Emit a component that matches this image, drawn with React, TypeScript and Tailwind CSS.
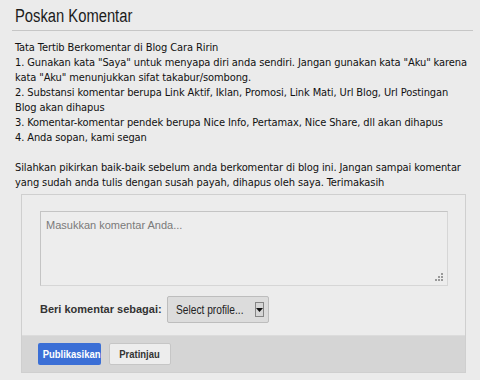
const rules = [
  'Tata Tertib Berkomentar di Blog Cara Ririn',
  '1. Gunakan kata "Saya" untuk menyapa diri anda sendiri. Jangan gunakan kata "Aku" karena',
  'kata "Aku" menunjukkan sifat takabur/sombong.',
  '2. Substansi komentar berupa Link Aktif, Iklan, Promosi, Link Mati, Url Blog, Url Postingan',
  'Blog akan dihapus',
  '3. Komentar-komentar pendek berupa Nice Info, Pertamax, Nice Share, dll akan dihapus',
  '4. Anda sopan, kami segan',
];

const closing = [
  'Silahkan pikirkan baik-baik sebelum anda berkomentar di blog ini. Jangan sampai komentar',
  'yang sudah anda tulis dengan susah payah, dihapus oleh saya. Terimakasih',
];

function ResizeGrip() {
  // little dotted triangle in the corner of the text box
  return (
    <svg width="9" height="9" viewBox="0 0 9 9" className="absolute right-[3px] bottom-[3px]">
      {[
        [6, 0], [6, 3], [3, 3], [6, 6], [3, 6], [0, 6],
      ].map(([x, y], i) => (
        <rect key={i} x={x} y={y} width="2" height="2" fill="#9a9a9a" />
      ))}
    </svg>
  );
}

export default function App() {
  return (
    <div className="w-[480px] h-[380px] bg-[#ebebeb] overflow-hidden">
      <div className="px-3 pt-[4px]">
        <h2 className="px-[3px] text-[18px] leading-[24px] text-[#1c1c1c] font-['Liberation_Sans',Arial,sans-serif]">
          <span className="inline-block origin-left scale-x-[0.82]">Poskan Komentar</span>
        </h2>
        <div className="mt-[2px] h-px bg-[#c6c6c6] w-[461px]" />
      </div>

      <div className="pl-[15px] pt-[9px] text-[11px] leading-[15px] tracking-[-0.1px] text-[#111] font-['DejaVu_Sans_Condensed','DejaVu_Sans',Verdana,sans-serif] whitespace-nowrap">
        {rules.map((line, i) => (
          <div key={i}>{line}</div>
        ))}
        <div className="h-[15px]" />
        {closing.map((line, i) => (
          <div key={i}>{line}</div>
        ))}
      </div>

      <div className="ml-[21px] mt-[4px] w-[445px] border border-[#cfcfcf] bg-[#ececec] font-['Liberation_Sans',Arial,sans-serif]">
        <div className="px-[18px] pt-4 pb-3">
          <div className="relative h-[75px] w-[408px] border border-[#d6d6d6] border-t-[#c4c4c4] border-l-[#c4c4c4] bg-[#ededed] px-[5px] pt-[5px] text-[11px] text-[#7a7a7a]">
            Masukkan komentar Anda...
            <ResizeGrip />
          </div>

          <div className="mt-[10px] flex items-center gap-[5px]">
            <span className="text-[11px] font-bold text-[#333]">Beri komentar sebagai:</span>
            <div className="flex h-[27px] w-[102px] items-center justify-between rounded-[2px] border border-[#bdbdbd] bg-[#dcdcdc] pl-[8px] pr-[4px]">
              <span className="inline-block origin-left scale-x-[0.85] whitespace-nowrap text-[12px] text-[#222]">
                Select profile...
              </span>
              <span className="flex h-[15px] w-[13px] items-center justify-center border border-[#858585] bg-[#d6d6d6]">
                <svg width="7" height="4" viewBox="0 0 7 4">
                  <path d="M0 0h7L3.5 4z" fill="#111" />
                </svg>
              </span>
            </div>
          </div>
        </div>

        <div className="flex h-[37px] items-center gap-2 border-t border-[#dcdcdc] bg-[#d5d5d5] px-4 text-[11px] font-bold">
          <button className="h-[22px] w-[63px] rounded-[2px] bg-[#3b6fd6] text-white">
            <span className="inline-block scale-x-[0.86]">Publikasikan</span>
          </button>
          <button className="h-[22px] w-[62px] rounded-[2px] border border-[#c6c6c6] bg-[#ededed] text-[#333]">
            <span className="inline-block scale-x-[0.86]">Pratinjau</span>
          </button>
        </div>
      </div>
    </div>
  );
}
